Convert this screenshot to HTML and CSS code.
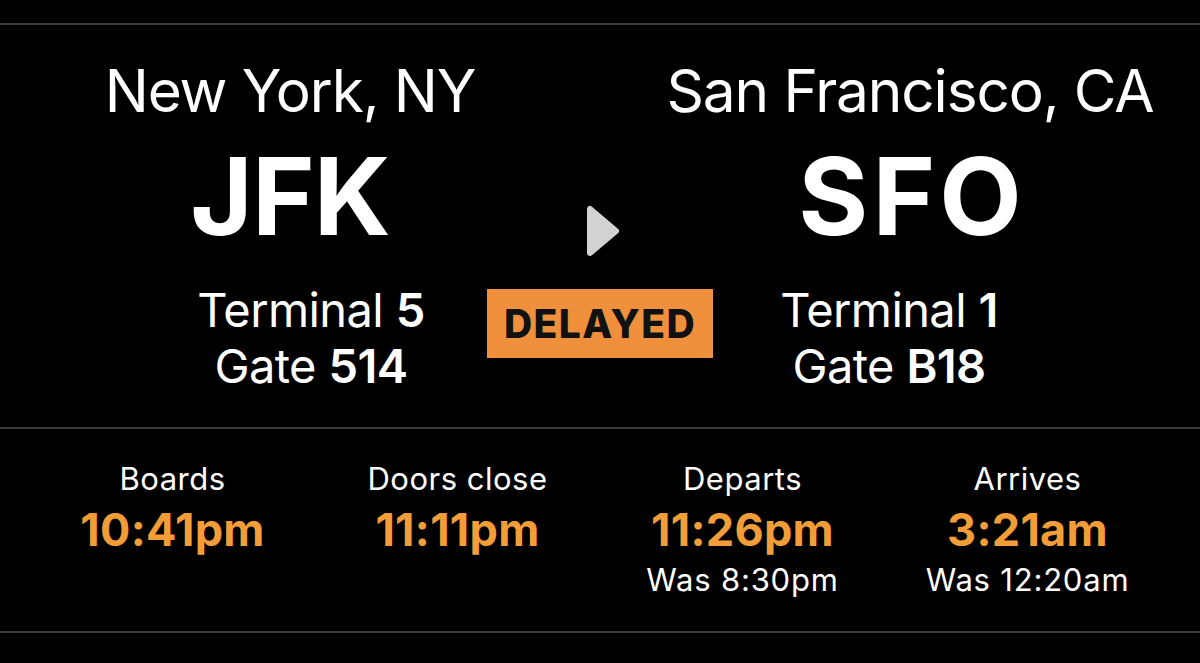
FILE: index.html
```html
<!DOCTYPE html>
<html lang="en">
<head>
<meta charset="utf-8">
<title>Flight JFK to SFO</title>
<link rel="stylesheet" href="styles.css">
</head>
<body>
<main class="board">
  <section class="route">
    <div class="airports">
      <div class="city">New York, NY</div>
      <div class="spacer"></div>
      <div class="city">San Francisco, CA</div>
      <div class="code">JFK</div>
      <div class="arrow">
        <svg width="34" height="52" viewBox="0 0 34 52" aria-hidden="true">
          <polygon points="4,4 4,48 30,26" fill="#d3d3d3" stroke="#d3d3d3" stroke-width="6" stroke-linejoin="round"/>
        </svg>
      </div>
      <div class="code code-wide">SFO</div>
    </div>
    <div class="gates">
      <div class="gate-info">
        <div class="line">Terminal <b>5</b></div>
        <div class="line">Gate <b>514</b></div>
      </div>
      <div class="status">DELAYED</div>
      <div class="gate-info">
        <div class="line">Terminal <b>1</b></div>
        <div class="line">Gate <b>B18</b></div>
      </div>
    </div>
  </section>
  <section class="times">
    <div class="time-col">
      <div class="label">Boards</div>
      <div class="time">10:41pm</div>
    </div>
    <div class="time-col">
      <div class="label">Doors close</div>
      <div class="time">11:11pm</div>
    </div>
    <div class="time-col">
      <div class="label">Departs</div>
      <div class="time">11:26pm</div>
      <div class="was">Was 8:30pm</div>
    </div>
    <div class="time-col">
      <div class="label">Arrives</div>
      <div class="time">3:21am</div>
      <div class="was">Was 12:20am</div>
    </div>
  </section>
</main>
</body>
</html>
```

FILE: styles.css
```css
html, body {
  margin: 0;
  padding: 0;
  background: #000;
}
body {
  font-family: Inter, "Noto Sans", "Liberation Sans", sans-serif;
  color: #fff;
  height: 663px;
  overflow: hidden;
}
.board {
  margin-top: 23px;
  border-top: 2px solid #3a3a3a;
}
.route {
  height: 404px;
  box-sizing: border-box;
  border-bottom: 2px solid #3a3a3a;
  padding-top: 30px;
}
.airports {
  display: grid;
  grid-template-columns: 1fr 40px 1fr;
  row-gap: 14px;
}
.city {
  text-align: center;
  font-size: 58.5px;
  line-height: 72px;
  font-weight: 400;
  letter-spacing: -1.1px;
}
.code {
  text-align: center;
  font-size: 107px;
  line-height: 110px;
  font-weight: 700;
  letter-spacing: -1px;
}
.code-wide {
  letter-spacing: 4px;
  text-indent: 4px;
}
.arrow {
  align-self: end;
  justify-self: end;
  margin-bottom: -6px;
  display: flex;
}
.gates {
  display: grid;
  grid-template-columns: 1fr 226px 1fr;
  column-gap: 20px;
  padding: 0 155px;
  margin-top: 31px;
}
.gate-info {
  text-align: center;
  font-size: 47px;
  line-height: 56px;
  letter-spacing: -0.6px;
}
.gate-info b {
  font-weight: 600;
}
.status {
  align-self: start;
  margin-top: 7px;
  height: 69px;
  background: #f0903c;
  color: #111;
  font-weight: 800;
  font-size: 39px;
  display: flex;
  align-items: center;
  justify-content: center;
  letter-spacing: 1.4px;
}
.times {
  display: grid;
  grid-template-columns: repeat(4, 1fr);
  padding: 31px 30px 0;
  height: 204px;
  box-sizing: border-box;
  border-bottom: 2px solid #3a3a3a;
}
.time-col {
  text-align: center;
}
.label {
  font-size: 31px;
  line-height: 38px;
  letter-spacing: 0.5px;
}
.time {
  margin-top: 8px;
  color: #f29d38;
  font-size: 45px;
  line-height: 48px;
  font-weight: 700;
  letter-spacing: 0.3px;
}
.was {
  margin-top: 6px;
  font-size: 31px;
  line-height: 40px;
  letter-spacing: 0.8px;
}
```
